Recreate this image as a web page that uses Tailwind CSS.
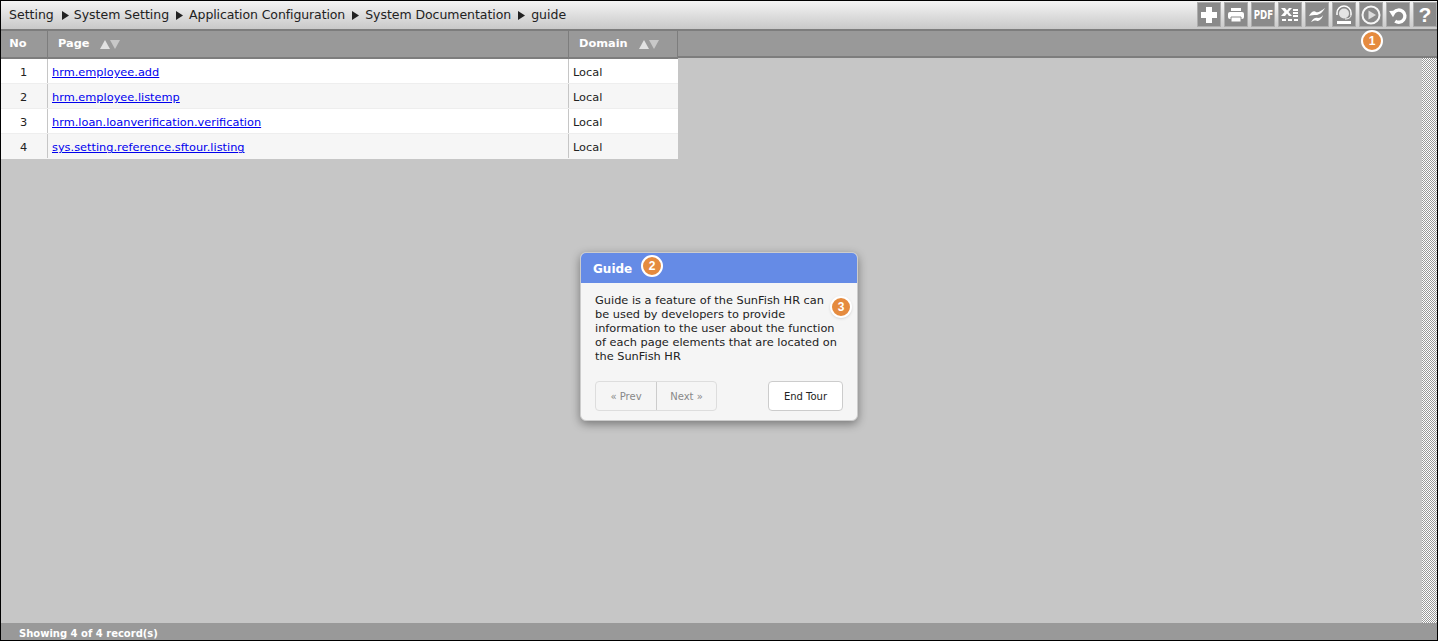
<!DOCTYPE html>
<html><head><meta charset="utf-8"><title>guide</title>
<script src="https://cdn.jsdelivr.net/npm/@tailwindcss/browser@4"></script></head>
<body class="m-0 overflow-hidden">
<div class="relative w-[1438px] h-[641px] flex flex-col bg-[#c6c6c6] border border-black font-['DejaVu_Sans',sans-serif] text-[11.35px] text-[#222]">
  <header class="h-[28px] flex items-center justify-between bg-gradient-to-b from-[#f4f4f4] to-[#c9c9c9] shrink-0">
    <nav class="pl-[8px] flex items-center text-[12.5px] text-[#222]">
      <span>Setting</span><svg class="ml-[8px] mr-[5px]" width="7" height="9" viewBox="0 0 7 9"><path d="M0 0l7 4.500L0 9z" fill="#222"/></svg><span>System Setting</span><svg class="ml-[7px] mr-[6px]" width="7" height="9" viewBox="0 0 7 9"><path d="M0 0l7 4.500L0 9z" fill="#222"/></svg><span class="tracking-[-0.1px]">Application Configuration</span><svg class="ml-[7px] mr-[6px]" width="7" height="9" viewBox="0 0 7 9"><path d="M0 0l7 4.500L0 9z" fill="#222"/></svg><span class="tracking-[-0.05px]">System Documentation</span><svg class="ml-[7px] mr-[6px]" width="7" height="9" viewBox="0 0 7 9"><path d="M0 0l7 4.500L0 9z" fill="#222"/></svg><span>guide</span>
    </nav>
    <div class="flex gap-[3px] self-start pt-[1px]">
      <button class="w-[24px] h-[25px] bg-[#8a8a8a] border border-[#adadad] flex items-center justify-center"><svg width="18" height="18" viewBox="0 0 18 18"><path d="M6 1h6v5h5v6h-5v5H6v-5H1V6h5z" fill="#fff"/></svg></button>
      <button class="w-[24px] h-[25px] bg-[#8a8a8a] border border-[#adadad] flex items-center justify-center"><svg width="18" height="16" viewBox="0 0 18 16" fill="#fff"><path d="M4 1h10v3H4z"/><rect x="1" y="5" width="16" height="7" rx="2"/><path d="M4 10h10v5H4z" stroke="#8a8a8a"/></svg></button>
      <button class="w-[24px] h-[25px] bg-[#8a8a8a] border border-[#adadad] flex items-center justify-center"><span class="text-white font-bold text-[12px] leading-none scale-x-[.72]">PDF</span></button>
      <button class="w-[24px] h-[25px] bg-[#8a8a8a] border border-[#adadad] flex items-center justify-center"><svg width="18" height="16" viewBox="0 0 18 16" fill="#fff"><path d="M0 1h4l2 2.500L8 1h3L7.500 5 11 9H8L6 6.500 4 9H0l3.500-4z"/><path d="M12 2h5v2h-5zM12 5h5v2h-5zM12 8h5v2h-5zM1 12h4v2H1zM7 12h4v2H7zM13 12h4v2h-4z"/></svg></button>
      <button class="w-[24px] h-[25px] bg-[#8a8a8a] border border-[#adadad] flex items-center justify-center"><svg width="18" height="18" viewBox="0 0 18 18" fill="#fff"><path d="M1 10C3 6 6 4 8 6c2 1 5-1 9-4-3 5-6 7-9 7-2 0-5 0-7 1z"/><path d="M3 16c2-4 5-5 7-4 2 0 4-1 5-3-1 4-4 6-6 6-2-1-4 0-6 1z"/></svg></button>
      <button class="w-[24px] h-[25px] bg-[#8a8a8a] border border-[#adadad] flex items-center justify-center"><svg width="20" height="20" viewBox="0 0 20 20"><circle cx="10" cy="8.500" r="5" fill="#e4e4e4"/><path d="M3 10V8a7 7 0 0 1 14 0v2" fill="none" stroke="#fff" stroke-width="1.500"/><path d="M17 10c0 3-3 4-6 4" fill="none" stroke="#fff"/><path d="M3 16h14v3H3z" fill="#fff"/></svg></button>
      <button class="w-[24px] h-[25px] bg-[#8a8a8a] border border-[#adadad] flex items-center justify-center"><svg width="20" height="20" viewBox="0 0 20 20"><circle cx="10" cy="10" r="8.500" fill="none" stroke="#f6f6f6" stroke-width="2"/><path d="M7.500 5.500 15 10l-7.500 4.500z" fill="#dcdcdc"/></svg></button>
      <button class="w-[24px] h-[25px] bg-[#8a8a8a] border border-[#adadad] flex items-center justify-center"><svg width="20" height="20" viewBox="0 0 18 18"><path d="M5.500 6.500A5.500 5.500 0 1 1 6.500 14.500" fill="none" stroke="#fff" stroke-width="3"/><path d="M1 5.500l7-.5-3.500 6z" fill="#fff"/></svg></button>
      <button class="w-[24px] h-[25px] bg-[#8a8a8a] border border-[#adadad] flex items-center justify-center text-white font-bold text-[21px] font-['Liberation_Sans',sans-serif]">?</button>
    </div>
  </header>
  <section class="h-[29px] shrink-0 bg-[#999] border-t-2 border-b-2 border-t-[#7d7d7d] border-b-[#7d7d7d]">
    <div class="flex w-[677px] h-[28px] font-bold text-white border-b-2 border-[#7d7d7d] bg-[#999]">
      <div class="w-[47px] border-r border-[#7d7d7d] flex items-center justify-center"><span class="-ml-[12px]">No</span></div>
      <div class="w-[521px] border-r border-[#7d7d7d] flex items-center pl-[10px] gap-[11px]"><span>Page</span><span class="flex"><svg width="10" height="9" viewBox="0 0 10 9"><path d="M5 0l5 9H0z" fill="#e2e2e2"/></svg><svg width="10" height="9" viewBox="0 0 10 9"><path d="M0 0h10L5 9z" fill="#c8c8c8"/></svg></span></div>
      <div class="w-[109px] border-r border-[#7d7d7d] flex items-center pl-[10px] gap-[11px]"><span>Domain</span><span class="flex"><svg width="10" height="9" viewBox="0 0 10 9"><path d="M5 0l5 9H0z" fill="#e2e2e2"/></svg><svg width="10" height="9" viewBox="0 0 10 9"><path d="M0 0h10L5 9z" fill="#c8c8c8"/></svg></span></div>
    </div>
  </section>
  <main class="flex-1 relative">
    <div class="w-[677px] mt-[1px]">
      <div class="flex h-[25px] bg-white items-center border-b border-[#eee]"><div class="w-[47px] h-full border-r border-[#c6c6c6] flex items-center justify-center pr-[1px] pt-[4px]">1</div><div class="w-[521px] h-full border-r border-[#c6c6c6] flex items-center pl-[4px] pt-[4px]"><a class="text-[#0000ee] underline" href="#">hrm.employee.add</a></div><div class="pl-[4px] pt-[4px]">Local</div></div>
      <div class="flex h-[25px] bg-[#f6f6f6] items-center border-b border-[#eee]"><div class="w-[47px] h-full border-r border-[#c6c6c6] flex items-center justify-center pr-[1px] pt-[4px]">2</div><div class="w-[521px] h-full border-r border-[#c6c6c6] flex items-center pl-[4px] pt-[4px]"><a class="text-[#0000ee] underline" href="#">hrm.employee.listemp</a></div><div class="pl-[4px] pt-[4px]">Local</div></div>
      <div class="flex h-[25px] bg-white items-center border-b border-[#eee]"><div class="w-[47px] h-full border-r border-[#c6c6c6] flex items-center justify-center pr-[1px] pt-[4px]">3</div><div class="w-[521px] h-full border-r border-[#c6c6c6] flex items-center pl-[4px] pt-[4px]"><a class="text-[#0000ee] underline" href="#">hrm.loan.loanverification.verification</a></div><div class="pl-[4px] pt-[4px]">Local</div></div>
      <div class="flex h-[25px] bg-[#f6f6f6] items-center border-b border-[#f6f6f6]"><div class="w-[47px] h-full border-r border-[#c6c6c6] flex items-center justify-center pr-[1px] pt-[4px]">4</div><div class="w-[521px] h-full border-r border-[#c6c6c6] flex items-center pl-[4px] pt-[4px]"><a class="text-[#0000ee] underline" href="#">sys.setting.reference.sftour.listing</a></div><div class="pl-[4px] pt-[4px]">Local</div></div>
    </div>
    <div class="absolute top-0 bottom-0 right-0 w-[15px] bg-[repeating-conic-gradient(#fff_0_25%,#999_0_50%)] bg-[length:2px_2px]"></div>
  </main>
  <footer class="h-[17px] shrink-0 bg-[#999] font-bold text-white pl-[18px] pt-[3px] flex items-center text-[10px]">Showing 4 of 4 record(s)</footer>

  <div class="absolute left-[1360px] top-[29px] w-[22px] h-[22px] rounded-full bg-[#e58b3f] border-2 border-white text-white font-bold text-[12px] font-['Liberation_Sans',sans-serif] flex items-center justify-center">1</div>

  <div class="absolute left-[579px] top-[251px] w-[278px] h-[169px] rounded-[6px] bg-[#f5f5f5] border border-[#ccc] shadow-[0_3px_10px_rgba(0,0,0,0.4)]">
    <div class="h-[30px] bg-[#658be6] rounded-t-[5px] text-white font-bold text-[12px] pl-[12px] pt-[2px] flex items-center">Guide</div>
    <span class="absolute left-[60px] top-[2px] w-[22px] h-[22px] rounded-full bg-[#e58b3f] border-2 border-white text-white font-bold text-[12px] font-['Liberation_Sans',sans-serif] flex items-center justify-center">2</span>
    <p class="ml-[14px] pt-[10px] leading-[14px] text-[#222] m-0 whitespace-nowrap">Guide is a feature of the SunFish HR can<br>be used by developers to provide<br>information to the user about the function<br>of each page elements that are located on<br>the SunFish HR</p>
    <span class="absolute left-[249px] top-[43px] w-[22px] h-[22px] rounded-full bg-[#e58b3f] border-2 border-white text-white font-bold text-[12px] font-['Liberation_Sans',sans-serif] flex items-center justify-center shadow">3</span>
    <div class="absolute left-[14px] right-[14px] bottom-[9px] flex justify-between text-[10px]">
      <div class="flex h-[30px] rounded-[4px] border border-[#ddd] text-[#888]">
        <span class="w-[61px] flex items-center justify-center border-r border-[#ccc]">« Prev</span><span class="w-[59px] flex items-center justify-center">Next »</span>
      </div>
      <div class="w-[75px] h-[30px] rounded-[4px] bg-white border border-[#ccc] flex items-center justify-center text-[#222]">End Tour</div>
    </div>
  </div>
</div>
</body></html>
